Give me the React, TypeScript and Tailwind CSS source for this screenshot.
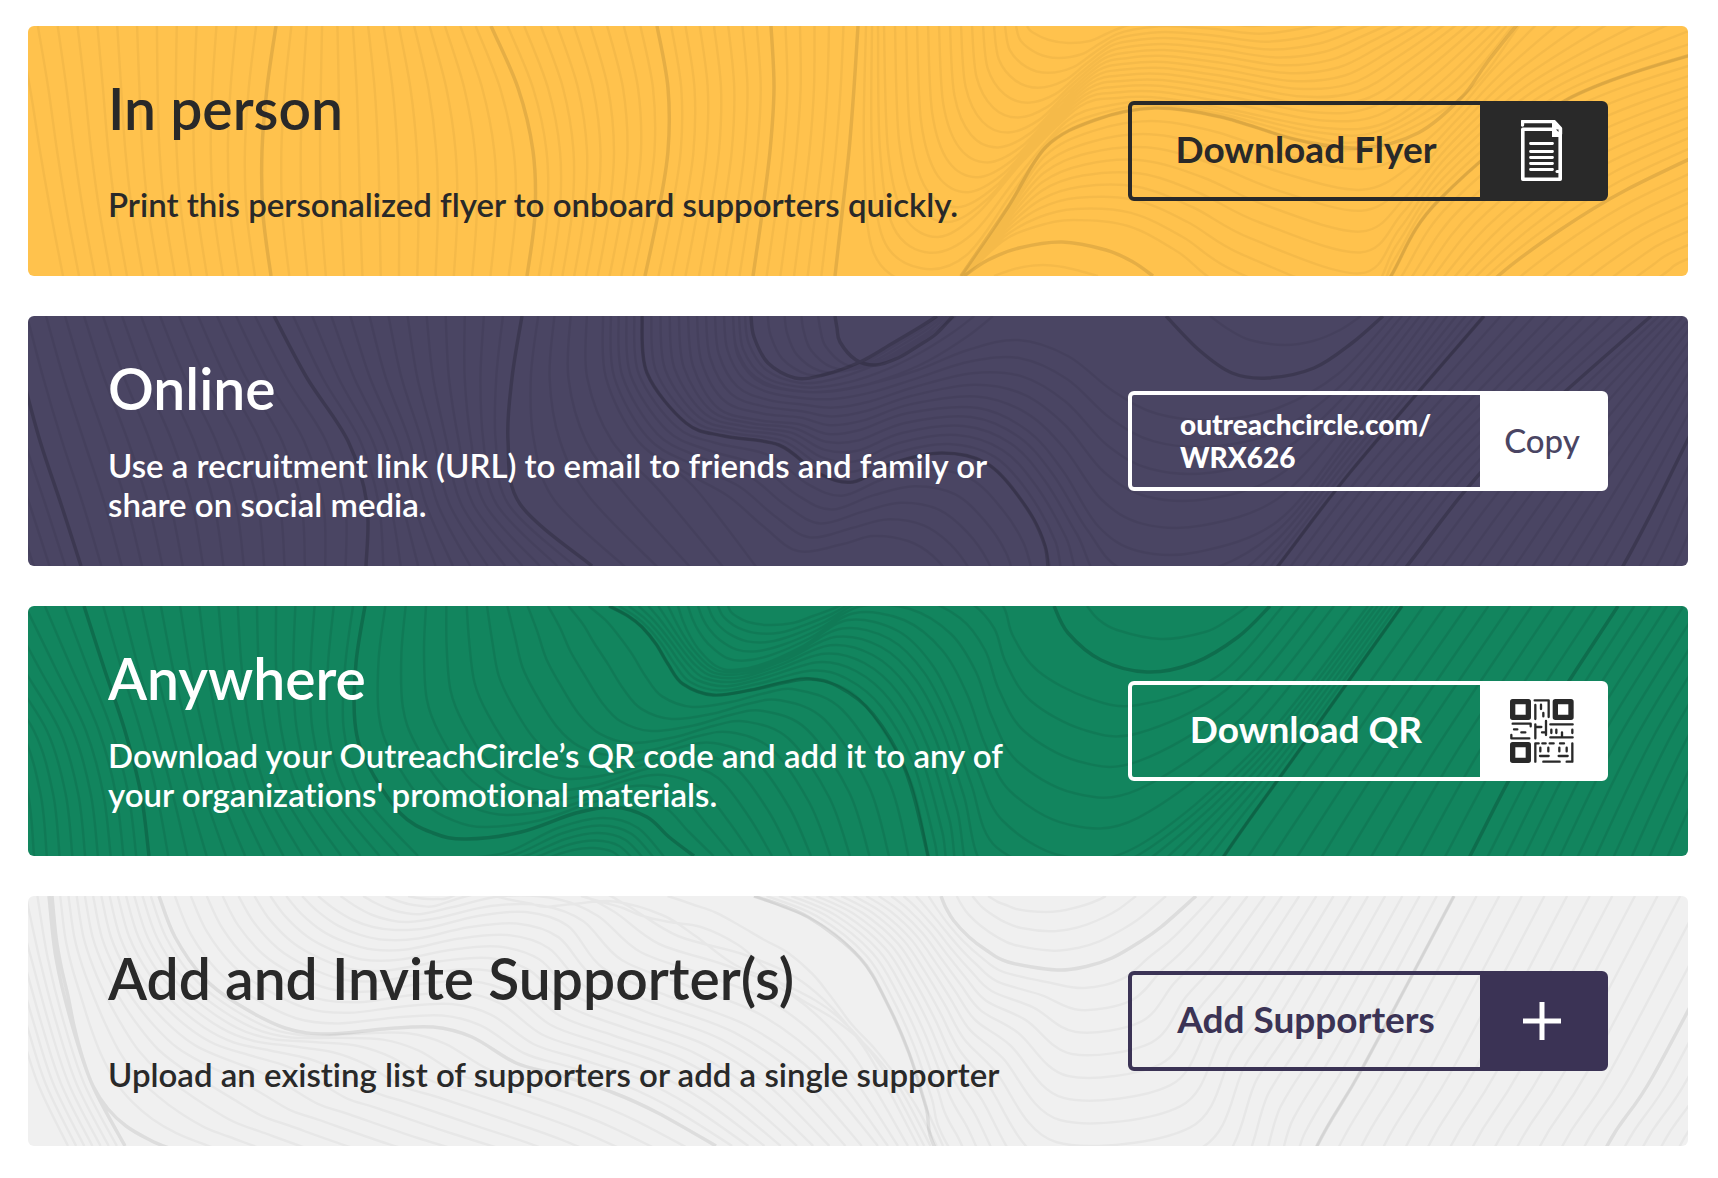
import React from "react";

type Guide = { pts: string; strong?: boolean; fill?: number };
type Point = [number, number];

// Each family is a list of guide curves. `fill` is the number of thin lines
// drawn between a guide and the next one. Guides in a family need equal point counts.
const flyerWaves: Guide[][] = [
  [
    { pts: "-10,0 2,62 12,125 23,188 35,250", fill: 12 },
    { pts: "248,0 239,62 234,125 235,188 243,250", strong: true, fill: 13 },
    { pts: "463,0 490,62 505,125 507,188 499,250", strong: true, fill: 9 },
    { pts: "629,0 640,62 640,125 630,188 617,250", strong: true, fill: 7 },
    { pts: "743,0 746,62 742,125 734,188 725,250", strong: true, fill: 5 },
    { pts: "830,0 826,62 821,125 814,188 807,250", strong: true },
  ],
  [
    { pts: "838,0 836,124 845,225 885,258 933,250 980,181 1018,121 1067,94 1127,82 1193,91 1270,114 1335,122 1434,71 1491,0", fill: 2 },
    { pts: "856,0 860,124 876,190 910,211 950,187 996,134 1051,81 1090,72 1133,72 1204,84 1297,102 1357,97 1412,57 1472,0", fill: 12 },
    { pts: "999,0 1004,6 1021,14 1040,17 1062,15 1078,8 1092,2 1106,-2 1138,-6 1182,-4 1226,0 1270,-6 1303,-12 1352,-20" },
  ],
  [
    { pts: "933,250 980,181 1018,121 1067,94 1127,82 1193,91 1270,114 1335,122 1390,107 1434,71 1461,34 1520,-40", strong: true, fill: 8 },
    { pts: "935,252 975,215 1010,200 1045,194 1100,200 1150,226 1200,262 1330,310 1363,250 1411,174 1538,74 1700,18" },
  ],
  [
    { pts: "936,250 960,234 991,222 1034,216 1078,224 1105,236 1125,250", strong: true, fill: 0 },
    { pts: "966,250 980,245 995,241 1015,239 1035,241 1052,245 1070,250" },
  ],
  [
    { pts: "1330,310 1363,250 1411,174 1538,74 1700,18", strong: true, fill: 9 },
    { pts: "1420,300 1470,250 1532,204 1598,164 1700,115", strong: true, fill: 6 },
    { pts: "1570,300 1620,260 1640,245 1655,235 1720,210" },
  ],
];

const onlineWaves: Guide[][] = [
  [
    { pts: "-90,0 -70,62 -50,125 -30,188 -10,250", fill: 3 },
    { pts: "-20,0 -5,62 12,125 33,188 53,250", strong: true, fill: 13 },
    { pts: "246,0 279,62 320,125 339,188 338,250", strong: true, fill: 12 },
    { pts: "494,0 484,62 480,125 492,188 564,250", strong: true, fill: 4 },
    { pts: "575,0 578,62 610,125 665,170 735,260" },
  ],
  [
    { pts: "575,0 578,62 610,125 655,155 700,180 735,210 770,235 815,228 845,220 880,225 905,240 925,265 935,290", fill: 4 },
    { pts: "614,0 619,57 658,107 696,120 751,129 790,157 825,166 865,147 914,137 958,147 991,181 1013,217 1022,250" },
  ],
  [
    { pts: "614,0 619,57 658,107 696,120 751,129 790,157 825,166 865,147 914,137 958,147 991,181 1017,230 1040,330 1180,340 1250,250 1324,154 1456,0", strong: true, fill: 4 },
    { pts: "660,0 665,50 690,92 730,104 770,108 800,118 832,114 880,97 950,92 1000,115 1035,155 1070,210 1110,235 1170,236 1250,205 1320,120 1410,0", fill: 4 },
    { pts: "705,0 708,30 722,56 745,70 780,76 810,74 850,66 890,54 940,34 990,24 1040,40 1085,75 1130,98 1190,104 1250,92 1310,58 1365,0" },
  ],
  [
    { pts: "705,0 710,40 735,68 780,76 820,73 860,62 900,45 940,20 965,0", fill: 2 },
    { pts: "723,0 726,21 740,47 767,62 795,59 832,46 865,27 892,11 909,0", strong: true, fill: 4 },
    { pts: "807,0 809,12 812,26 828,44 848,49 870,42 890,30 908,18 925,0", strong: true },
  ],
  [
    { pts: "1138,0 1171,34 1204,57 1240,62 1286,52 1324,27 1355,0", strong: true, fill: 0 },
    { pts: "1182,0 1200,13 1222,24 1256,29 1285,25 1312,14 1333,0" },
  ],
  [
    { pts: "1180,340 1250,250 1324,154 1456,0", fill: 9 },
    { pts: "1310,340 1379,250 1470,138 1623,0", strong: true, fill: 11 },
    { pts: "1540,340 1595,250 1637,170 1720,0", strong: true, fill: 4 },
    { pts: "1620,340 1680,250 1708,170 1780,0" },
  ],
];

const qrWaves: Guide[][] = [
  [
    { pts: "-120,0 -70,62 -20,125 0,188 6,250", fill: 8 },
    { pts: "56,0 76,62 97,125 113,188 121,250", strong: true, fill: 13 },
    { pts: "325,0 317,62 316,125 335,188 390,250" },
  ],
  [
    { pts: "337,0 328,57 327,117 339,157 372,207 405,227 438,233 493,226 548,207 586,201 619,211 641,231 666,250", strong: true, fill: 11 },
    { pts: "581,0 600,10 614,21 628,38 640,58 655,78 685,89 723,84 755,76 785,73 832,94 881,171 900,250" },
  ],
  [
    { pts: "440,252 480,246 530,222 575,212 610,222 640,256", fill: 3 },
    { pts: "500,262 520,252 545,244 565,242 585,246 600,260" },
  ],
  [
    { pts: "581,0 600,10 614,21 628,38 640,58 655,78 685,89 723,84 778,73 811,81 845,108 877,163 900,250 930,400 1120,370 1196,250 1270,146 1374,0", strong: true, fill: 6 },
    { pts: "650,0 655,15 662,30 672,45 688,60 705,64 735,58 775,40 820,14 870,25 905,60 930,110 950,165 975,215 1035,250 1110,240 1230,140 1340,0", fill: 4 },
    { pts: "700,0 703,6 708,10 720,16 740,19 765,17 785,10 811,0 850,-20 900,-30 950,-20 975,0 985,30 1010,65 1060,92 1110,99 1190,70 1255,0" },
  ],
  [
    { pts: "1026,0 1040,27 1073,54 1119,66 1166,57 1210,31 1242,0", strong: true, fill: 0 },
    { pts: "1059,0 1070,13 1089,24 1133,33 1177,26 1200,14 1220,0" },
  ],
  [
    { pts: "1120,370 1196,250 1270,146 1374,0", fill: 9 },
    { pts: "1380,370 1442,250 1500,140 1590,0", strong: true, fill: 10 },
    { pts: "1590,370 1640,250 1700,120 1770,0" },
  ],
];

const supporterWaves: Guide[][] = [
  [
    { pts: "-60,0 -30,62 -10,125 10,188 40,250", fill: 6 },
    { pts: "21,0 28,62 43,125 64,188 97,250", strong: true },
  ],
  [
    { pts: "24,0 28,41 33,70 40,100 46,130 54,160 65,190 80,213 98,230 120,243 141,252 220,280 320,305 420,330", strong: true, fill: 12 },
    { pts: "131,0 147,41 175,81 208,107 257,132 301,138 356,133 405,131 444,141 488,167 531,179 586,197 630,217 688,250", strong: true, fill: 9 },
    { pts: "290,0 305,12 325,24 345,31 367,34 400,32 450,20 498,16 540,30 575,72 640,100 720,130 790,180 850,250", fill: 3 },
    { pts: "380,0 390,2 400,3 410,3 420,2 450,-10 500,-20 560,-10 600,10 650,40 720,60 780,90 835,150 890,250", fill: 3 },
    { pts: "726,0 740,5 755,11 780,21 806,37 832,62 846,82 859,107 870,130 881,157 890,185 898,211 907,232 915,250" },
  ],
  [
    { pts: "726,0 780,21 832,62 859,107 881,157 898,211 912,262 1000,400 1230,380 1289,250 1335,171 1426,0", strong: true, fill: 14 },
    { pts: "913,0 918,12 926,25 941,41 958,54 980,66 1029,74 1060,70 1084,62 1110,47 1133,31 1168,0", strong: true, fill: 2 },
    { pts: "960,0 965,3 970,6 978,9 988,13 1000,15 1018,16 1032,15 1046,12 1060,8 1070,4 1078,0" },
  ],
  [
    { pts: "1230,380 1289,250 1335,171 1426,0", fill: 12 },
    { pts: "1520,380 1579,250 1625,180 1720,0", strong: true, fill: 4 },
    { pts: "1610,380 1670,250 1715,180 1800,0" },
  ],
];

const parse = (pts: string): Point[] =>
  pts.split(" ").map((p) => p.split(",").map(Number) as Point);

// Catmull-Rom spline through the points, as cubic beziers
const toPath = (p: Point[]) => {
  let d = `M${p[0][0]} ${p[0][1]}`;
  for (let i = 0; i < p.length - 1; i++) {
    const a = p[i - 1] || p[i];
    const b = p[i];
    const c = p[i + 1];
    const e = p[i + 2] || c;
    d += `C${b[0] + (c[0] - a[0]) / 6} ${b[1] + (c[1] - a[1]) / 6} ${c[0] - (e[0] - b[0]) / 6} ${c[1] - (e[1] - b[1]) / 6} ${c[0]} ${c[1]}`;
  }
  return d;
};

const buildLines = (families: Guide[][]) => {
  const thin: string[] = [];
  const strong: string[] = [];
  families.forEach((family) => {
    family.forEach((guide, i) => {
      const from = parse(guide.pts);
      (guide.strong ? strong : thin).push(toPath(from));
      if (!guide.fill || !family[i + 1]) return;
      const to = parse(family[i + 1].pts);
      for (let n = 1; n <= guide.fill; n++) {
        const t = n / (guide.fill + 1);
        thin.push(
          toPath(from.map(([x, y], k) => [x + (to[k][0] - x) * t, y + (to[k][1] - y) * t] as Point))
        );
      }
    });
  });
  return { thin: thin.join(""), strong: strong.join("") };
};

const Waves: React.FC<{ families: Guide[][]; thinOpacity: number; strongOpacity: number }> = ({
  families,
  thinOpacity,
  strongOpacity,
}) => {
  const { thin, strong } = buildLines(families);
  return (
    <svg
      className="absolute inset-0 h-full w-full"
      viewBox="0 0 1660 250"
      preserveAspectRatio="xMidYMid slice"
      fill="none"
      stroke="#000"
      aria-hidden="true"
    >
      <path d={thin} strokeWidth="2.5" strokeOpacity={thinOpacity} />
      <path d={strong} strokeWidth="3.5" strokeOpacity={strongOpacity} />
    </svg>
  );
};

const FlyerIcon = () => (
  <svg width="42" height="62" viewBox="0 0 42 62" fill="none" stroke="#fff" aria-hidden="true">
    <path d="M1.5 5V1.5H33L39.5 8.5V14" strokeWidth="3.4" strokeLinecap="round" strokeLinejoin="round" />
    <path d="M31 1L41 9V17H31Z" fill="#fff" stroke="none" />
    <path d="M35 9.5h2.5v2.5z" fill="#292929" stroke="none" />
    <path d="M31 9.2H1.8V59.2H39.2V14" strokeWidth="3.6" strokeLinejoin="round" />
    <path d="M9.5 23.5H31.5M9.5 31.5H31.5M9.5 37.5H31.5M9.5 43.5H31.5M9.5 49.5H31.5" strokeWidth="2.8" strokeLinecap="round" />
    <path d="M36 51.5h1.5" strokeWidth="3" strokeLinecap="round" />
  </svg>
);

const QrIcon = () => (
  <svg width="64" height="64" viewBox="0 0 192 192" fill="none" stroke="#292929" aria-hidden="true">
    <path
      d="M8 8H55V55H8ZM136 8H183V55H136ZM8 137H55V184H8Z"
      strokeWidth="16"
      strokeLinejoin="round"
    />
    <path
      d="M74 4H116V54M76 18V60M93 17V30M100 42V52M8 74H62V82M12 91H22M34 100H46M4 108V118H58M76 76V118M76 84H94M108 66V108M96 100H108M121 76H188M124 92V102M139 92V102M156 100V114M121 115H188M187 92V102M76 188V133H86M97 133H107M119 133H131M150 133H162M91 146V157M115 146V157M148 146V157M170 146V157M90 171H116M146 171H173M100 188H149M187 133V188H170"
      strokeWidth="7"
      strokeLinecap="round"
      strokeLinejoin="round"
    />
  </svg>
);

const PlusIcon = () => (
  <svg width="38" height="38" viewBox="0 0 38 38" stroke="#fff" strokeWidth="5" aria-hidden="true">
    <path d="M19 0V38M0 19H38" />
  </svg>
);

type PanelProps = {
  title: string;
  text: string;
  className: string;
  waves: React.ReactNode;
  children: React.ReactNode;
};

const Panel: React.FC<PanelProps> = ({ title, text, className, waves, children }) => (
  <section
    className={`relative flex min-h-[250px] items-stretch justify-between gap-8 overflow-hidden rounded-md px-20 ${className}`}
  >
    {waves}
    <div className="relative flex max-w-[920px] flex-1 flex-col justify-around pt-[25px] pb-[31px]">
      <h2 className="text-[57px] leading-[72px] font-semibold">{title}</h2>
      <p className="text-[33px] leading-[39px] font-semibold">{text}</p>
    </div>
    <div className="relative flex w-[480px] shrink-0 items-center">{children}</div>
  </section>
);

const actionClass = "flex h-[100px] w-full rounded-md border-4";

type ActionButtonProps = {
  label: string;
  className: string;
  iconClassName: string;
  icon: React.ReactNode;
};

const ActionButton: React.FC<ActionButtonProps> = ({ label, className, iconClassName, icon }) => (
  <button type="button" className={`${actionClass} ${className}`}>
    <span className="flex h-full flex-1 items-center justify-center pb-1 text-[37px] font-bold">{label}</span>
    <span className={`flex h-full w-[124px] items-center justify-center ${iconClassName}`}>{icon}</span>
  </button>
);

const App: React.FC = () => {
  const copyLink = () => {
    navigator.clipboard?.writeText("outreachcircle.com/WRX626");
  };

  return (
    <main className="flex flex-col gap-10 bg-white pt-[26px] pr-[30px] pb-8 pl-7 font-['Lato',sans-serif] [font-variant-ligatures:none]">
      <Panel
        title="In person"
        text="Print this personalized flyer to onboard supporters quickly."
        className="bg-[#ffc24d] text-[#292929]"
        waves={<Waves families={flyerWaves} thinOpacity={0.04} strongOpacity={0.1} />}
      >
        <ActionButton
          label="Download Flyer"
          className="border-[#292929]"
          iconClassName="bg-[#292929]"
          icon={<FlyerIcon />}
        />
      </Panel>

      <Panel
        title="Online"
        text="Use a recruitment link (URL) to email to friends and family or share on social media."
        className="bg-[#4a4563] text-white"
        waves={<Waves families={onlineWaves} thinOpacity={0.06} strongOpacity={0.18} />}
      >
        <div className={`${actionClass} border-white`}>
          <p className="flex flex-1 items-center pl-12 text-[28px] leading-[33px] font-black">
            <span>
              outreachcircle.com/
              <br />
              WRX626
            </span>
          </p>
          <button type="button" onClick={copyLink} className="w-[124px] bg-white text-[33px] font-medium text-[#4a4563]">
            Copy
          </button>
        </div>
      </Panel>

      <Panel
        title="Anywhere"
        text="Download your OutreachCircle’s QR code and add it to any of your organizations' promotional materials."
        className="bg-[#12855e] text-white"
        waves={<Waves families={qrWaves} thinOpacity={0.08} strongOpacity={0.18} />}
      >
        <ActionButton
          label="Download QR"
          className="border-white"
          iconClassName="bg-white"
          icon={<QrIcon />}
        />
      </Panel>

      <Panel
        title="Add and Invite Supporter(s)"
        text="Upload an existing list of supporters or add a single supporter"
        className="bg-[#f0f0f0] text-[#292929]"
        waves={<Waves families={supporterWaves} thinOpacity={0.035} strongOpacity={0.08} />}
      >
        <ActionButton
          label="Add Supporters"
          className="border-[#3b3355] text-[#3b3355]"
          iconClassName="bg-[#3b3355]"
          icon={<PlusIcon />}
        />
      </Panel>
    </main>
  );
};

export default App;
